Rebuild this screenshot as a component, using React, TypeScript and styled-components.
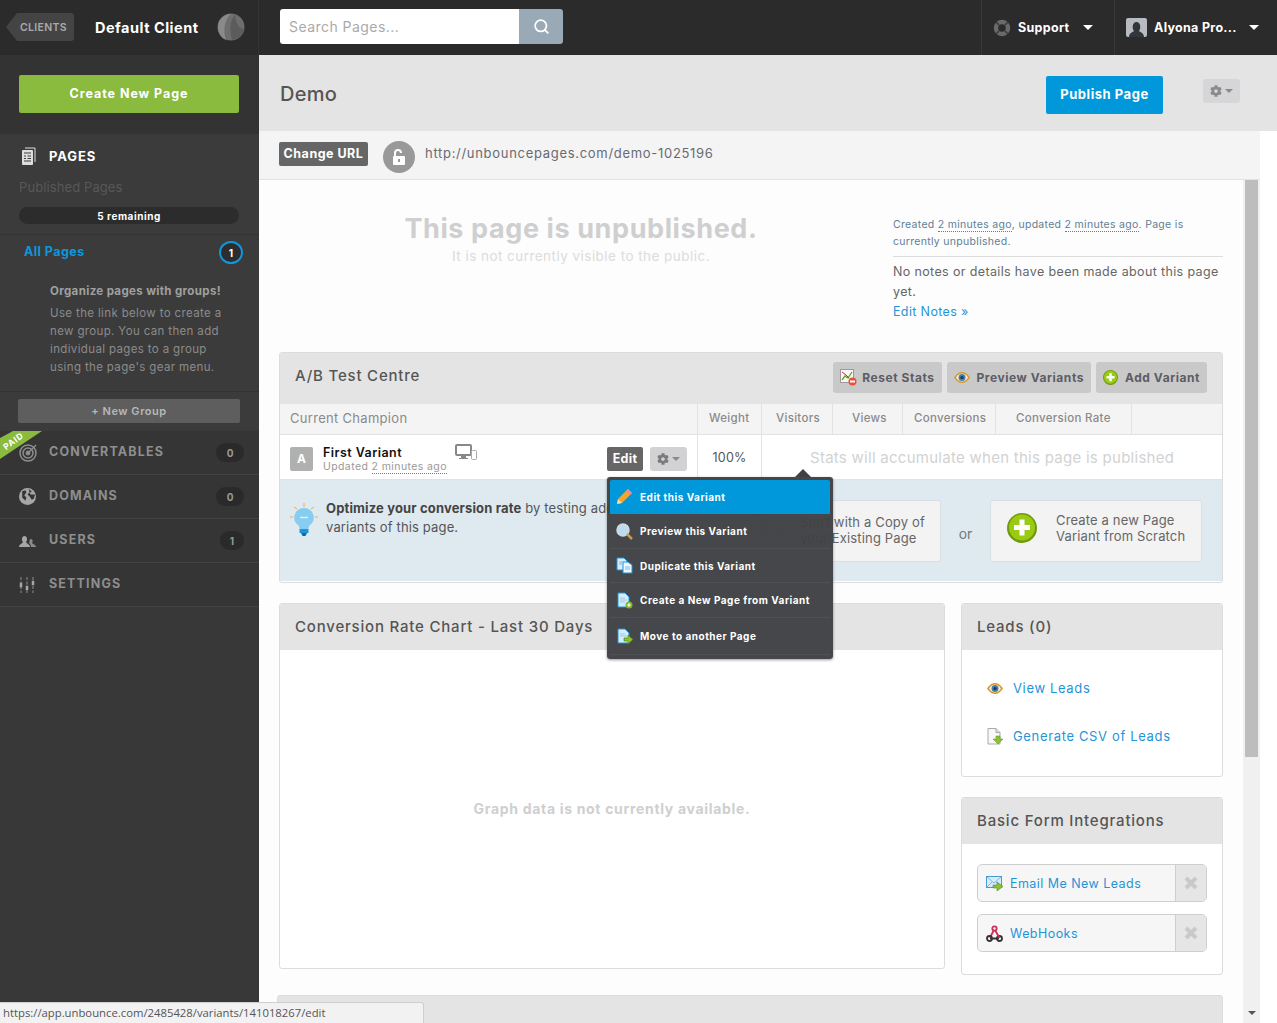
import React from "react";
import styled, { createGlobalStyle } from "styled-components";
import { Search } from "lucide-react";
import { FaCog } from "react-icons/fa";

const FONT = `Inter, "Open Sans", "Liberation Sans", sans-serif`;

const GlobalStyle = createGlobalStyle`
  html, body { margin: 0; padding: 0; height: 100%; overflow: hidden; background: #fff; }
  body { font-family: ${FONT}; }
  * { box-sizing: border-box; }
`;

/* ---------- shell ---------- */
const Shell = styled.div`
  position: relative;
  width: 100vw;
  height: 100vh;
  overflow: hidden;
  display: flex;
  flex-direction: column;
`;
const TopBar = styled.header`
  height: 55px;
  flex: none;
  background: #2b2b2b;
  display: flex;
  align-items: stretch;
`;
const ClientArea = styled.div`
  width: 259px;
  flex: none;
  display: flex;
  align-items: center;
  padding: 0 13px 1px 6px;
  border-right: 1px solid #333;
`;
const ClientsTag = styled.div`
  width: 68px;
  height: 28px;
  background: #444;
  border-radius: 3px;
  clip-path: polygon(11px 0, 100% 0, 100% 100%, 11px 100%, 0 50%);
  color: #aaa;
  font-size: 10.5px;
  font-weight: 600;
  letter-spacing: 0.3px;
  display: flex;
  align-items: center;
  padding-left: 14px;
`;
const ClientName = styled.div`
  flex: 1;
  margin-left: 21px;
  color: #fff;
  font-size: 14.5px;
  font-weight: 700;
  letter-spacing: 0.5px;
`;
const SearchArea = styled.div`
  flex: 1;
  display: flex;
  align-items: center;
  padding: 0 0 2px 21px;
`;
const SearchInput = styled.div`
  width: 239px;
  height: 35px;
  background: #fff;
  border-radius: 3px 0 0 3px;
  color: #aaa;
  font-size: 14px;
  letter-spacing: 0.45px;
  display: flex;
  align-items: center;
  padding-left: 9px;
`;
const SearchButton = styled.div`
  width: 44px;
  height: 35px;
  background: #9aa9b6;
  border-radius: 0 3px 3px 0;
  color: #fff;
  display: flex;
  align-items: center;
  justify-content: center;
`;
const TopMenu = styled.div<{ $w: number; $end: number }>`
  width: ${(p) => p.$w}px;
  flex: none;
  border-left: 1px solid #383838;
  color: #fff;
  font-size: 12.5px;
  font-weight: 700;
  letter-spacing: 0.3px;
  display: flex;
  align-items: center;
  padding: 0 ${(p) => p.$end}px 0 11px;
  gap: 7px;
`;
const TopMenuLabel = styled.span`
  flex: 1;
  white-space: nowrap;
`;
const DownCaret = styled.span`
  width: 0;
  height: 0;
  border-left: 5px solid transparent;
  border-right: 5px solid transparent;
  border-top: 5px solid #fff;
`;
const Body = styled.div`
  flex: 1;
  min-height: 0;
  display: flex;
`;

/* ---------- sidebar ---------- */
const Sidebar = styled.aside`
  width: 259px;
  flex: none;
  background: #383838;
  display: flex;
  flex-direction: column;
`;
const CreateArea = styled.div`
  height: 79px;
  background: #333;
  padding: 20px 20px 0 19px;
`;
const CreateButton = styled.div`
  height: 38px;
  padding-bottom: 1px;
  background: #8aba3e;
  border-radius: 2px;
  color: #fff;
  font-size: 12.5px;
  font-weight: 700;
  letter-spacing: 0.95px;
  display: flex;
  align-items: center;
  justify-content: center;
`;
const PagesSection = styled.section`
  background: #3b3b3b;
  display: flex;
  flex-direction: column;
`;
const PagesHead = styled.div`
  display: flex;
  align-items: center;
  gap: 13px;
  padding: 7px 0 0 22px;
  height: 37px;
  color: #fff;
  font-size: 13px;
  font-weight: 700;
  letter-spacing: 0.9px;
`;
const Published = styled.div`
  margin: 8px 0 0 19px;
  color: #585858;
  font-size: 13px;
  line-height: 16px;
  letter-spacing: 0.1px;
`;
const Remaining = styled.div`
  margin: 12px 20px 0 19px;
  height: 17px;
  border-radius: 9px;
  background: #2c2c2c;
  color: #fff;
  font-size: 10px;
  font-weight: 700;
  letter-spacing: 0.55px;
  display: flex;
  align-items: center;
  justify-content: center;
`;
const AllPagesRow = styled.div`
  margin-top: 10px;
  height: 33px;
  border-top: 1px solid #343434;
  padding: 6px 16px 0 24px;
  display: flex;
  align-items: flex-start;
  justify-content: space-between;
  color: #0f96dc;
  font-size: 12.5px;
  font-weight: 700;
  letter-spacing: 0.45px;
`;
const AllPagesLabel = styled.span`
  margin-top: 3px;
`;
const CountRing = styled.div`
  width: 24px;
  height: 23px;
  border-radius: 50%;
  border: 2px solid #0f96dc;
  color: #fff;
  background: #2d2d2d;
  font-size: 10px;
  font-weight: 700;
  letter-spacing: 0;
  display: flex;
  align-items: center;
  justify-content: center;
`;
const OrganizeBlock = styled.div`
  padding: 17px 34px 15px 50px;
  border-bottom: 1px solid #333;
  color: #8b8b8b;
  font-size: 11.5px;
  line-height: 18px;
  letter-spacing: 0.36px;
`;
const OrganizeTitle = styled.div`
  color: #a0a0a0;
  font-weight: 700;
  line-height: 14px;
  margin-bottom: 6px;
`;
const NewGroupArea = styled.div`
  height: 39px;
  padding: 7px 19px 0 18px;
  background: #3b3b3b;
`;
const NewGroupButton = styled.div`
  height: 24px;
  background: #5e5e5e;
  border-radius: 2px;
  color: #b8b8b8;
  font-size: 11px;
  font-weight: 600;
  letter-spacing: 0.55px;
  display: flex;
  align-items: center;
  justify-content: center;
`;
const NavItem = styled.div`
  position: relative;
  height: 44px;
  background: #353535;
  border-bottom: 1px solid #424242;
  display: flex;
  align-items: center;
  padding: 0 15px 3px 19px;
  color: #8e8e8e;
  font-size: 12.5px;
  font-weight: 700;
  letter-spacing: 1.15px;
`;
const NavIcon = styled.span`
  width: 30px;
  flex: none;
  display: flex;
  align-items: center;
  margin-top: 3px;
`;
const NavLabel = styled.span`
  flex: 1;
`;
const NavCount = styled.span<{ $w: number }>`
  width: ${(p) => p.$w}px;
  height: 19px;
  margin-top: 3px;
  border-radius: 10px;
  background: #2a2a2a;
  color: #999;
  font-size: 10px;
  letter-spacing: 0;
  display: flex;
  align-items: center;
  justify-content: center;
`;
const PaidRibbon = styled.svg`
  position: absolute;
  left: 0;
  top: 0;
`;
const PaidText = styled.span`
  position: absolute;
  left: 2px;
  top: 4px;
  transform: rotate(-36deg);
  color: #fff;
  font-size: 8.5px;
  line-height: 12px;
  font-weight: 700;
  letter-spacing: 0.8px;
`;

/* ---------- main ---------- */
const Main = styled.main`
  flex: 1;
  min-width: 0;
  display: flex;
  flex-direction: column;
  background: #fff;
`;
const PageHeader = styled.div`
  height: 76px;
  flex: none;
  background: #e4e4e4;
  display: flex;
  align-items: flex-start;
  padding: 21px 37px 0 21px;
`;
const PageTitle = styled.h1`
  flex: 1;
  margin: 5px 0 0;
  color: #555;
  font-size: 20px;
  line-height: 26px;
  font-weight: 500;
  letter-spacing: 0.3px;
`;
const PublishButton = styled.div`
  width: 117px;
  height: 38px;
  padding-bottom: 2px;
  background: #0098da;
  border-radius: 2px;
  color: #fff;
  font-size: 13px;
  font-weight: 700;
  letter-spacing: 0.55px;
  display: flex;
  align-items: center;
  justify-content: center;
  margin-right: 40px;
`;
const GearButton = styled.div<{ $bg: string; $ink: string }>`
  width: 37px;
  height: 24px;
  background: ${(p) => p.$bg};
  color: ${(p) => p.$ink};
  border-radius: 3px;
  display: flex;
  align-items: center;
  justify-content: center;
  gap: 3px;
`;
const SmallCaret = styled.span<{ $ink: string }>`
  width: 0;
  height: 0;
  border-left: 4px solid transparent;
  border-right: 4px solid transparent;
  border-top: 4px solid ${(p) => p.$ink};
`;
const HeaderGear = styled(GearButton)`
  margin-top: 3px;
`;
const Lower = styled.div`
  flex: 1;
  min-height: 0;
  display: flex;
`;
const LowerMain = styled.div`
  width: 1001px;
  flex: none;
  display: flex;
  flex-direction: column;
`;
const UrlBar = styled.div`
  height: 49px;
  flex: none;
  background: #f4f4f4;
  border-bottom: 1px solid #e2e2e2;
  display: flex;
  align-items: center;
  padding: 0 0 3px 20px;
`;
const ChangeUrl = styled.div`
  width: 89px;
  height: 24px;
  background: #666;
  border-radius: 2px;
  color: #fff;
  font-size: 12.5px;
  font-weight: 700;
  letter-spacing: 0.5px;
  display: flex;
  align-items: center;
  justify-content: center;
`;
const LockCircle = styled.div`
  width: 32px;
  height: 32px;
  margin: 7px 10px 0 15px;
  border-radius: 50%;
  background: #999;
  display: flex;
  align-items: center;
  justify-content: center;
`;
const UrlText = styled.div`
  margin-top: -1px;
  color: #6a6a72;
  font-size: 13px;
  letter-spacing: 0.7px;
`;
const ScrollRow = styled.div`
  flex: 1;
  min-height: 0;
  display: flex;
`;
const Content = styled.div`
  flex: 1;
  min-width: 0;
  overflow: hidden;
  padding: 0 20px;
  background: #fdfdfd;
`;
const ScrollTrack = styled.div`
  width: 17px;
  flex: none;
  background: #f0f0f0;
  padding: 0 2px;
  display: flex;
  flex-direction: column;
  align-items: stretch;
`;
const ScrollThumb = styled.div`
  height: 577px;
  background: #bdbdbd;
`;
const ScrollSpacer = styled.div`
  flex: 1;
`;
const ScrollArrow = styled.div`
  align-self: center;
  margin-bottom: 8px;
  width: 0;
  height: 0;
  border-left: 4px solid transparent;
  border-right: 4px solid transparent;
  border-top: 4px solid #555;
`;
const Gutter = styled.div`
  flex: 1;
  background: #fff;
`;

const Unpublished = styled.section`
  height: 172px;
  display: flex;
`;
const UnpubLeft = styled.div`
  width: 604px;
  padding-top: 33px;
  text-align: center;
`;
const UnpubTitle = styled.div`
  color: #cfcfcf;
  font-size: 27px;
  line-height: 32px;
  font-weight: 700;
  letter-spacing: 0.6px;
`;
const UnpubSub = styled.div`
  margin-top: 2px;
  color: #dcdcdc;
  font-size: 13.5px;
  line-height: 18px;
  letter-spacing: 0.46px;
`;
const UnpubRight = styled.div`
  margin-left: 10px;
  width: 330px;
  padding-top: 36px;
`;
const MetaText = styled.div`
  height: 41px;
  border-bottom: 1px solid #ddd;
  color: #5f7f96;
  font-size: 10.5px;
  line-height: 17px;
  letter-spacing: 0.3px;
`;
const DottedTime = styled.span`
  border-bottom: 1px dotted #777;
`;
const Notes = styled.div`
  margin-top: 5px;
  color: #666;
  font-size: 12.5px;
  line-height: 20px;
  letter-spacing: 0.36px;
`;
const BlueLink = styled.span`
  color: #1f94d8;
`;

const Panel = styled.section<{ $h: number }>`
  height: ${(p) => p.$h}px;
  border: 1px solid #dcdcdc;
  border-radius: 3px;
  background: #fff;
  overflow: hidden;
`;
const OverflowPanel = styled(Panel)`
  overflow: visible;
`;
const PanelHead = styled.div<{ $h: number }>`
  height: ${(p) => p.$h}px;
  background: #e4e4e4;
  padding: 0 15px 2px;
  display: flex;
  align-items: center;
  color: #555;
  font-size: 15px;
  font-weight: 500;
  letter-spacing: 0.8px;
`;
const AbTitle = styled.div`
  flex: 1;
  padding-bottom: 5px;
`;
const AbButton = styled.div<{ $gap: number }>`
  height: 31px;
  margin: 0 0 0 5px;
  background: #c9c9c9;
  border-radius: 3px;
  color: #5c5c66;
  font-size: 12px;
  font-weight: 700;
  letter-spacing: 0.55px;
  display: flex;
  align-items: center;
  gap: ${(p) => p.$gap}px;
  padding: 0 7px;
  white-space: nowrap;
`;
const TableHead = styled.div`
  height: 31px;
  background: #f4f4f4;
  border-bottom: 1px solid #e2e2e2;
  display: flex;
  color: #8a8a8a;
  font-size: 11.5px;
  font-weight: 500;
  letter-spacing: 0.3px;
`;
const Th = styled.div<{ $w: number; $pad: number }>`
  width: ${(p) => p.$w}px;
  flex: none;
  padding: 0 0 2px ${(p) => p.$pad}px;
  border-right: 1px solid #e2e2e2;
  display: flex;
  align-items: center;
`;
const ChampionTh = styled(Th)`
  font-size: 13px;
  font-weight: 400;
`;
const VariantRow = styled.div`
  height: 44px;
  display: flex;
  align-items: stretch;
`;
const VariantCell = styled.div`
  width: 418px;
  flex: none;
  border-right: 1px solid #e2e2e2;
  display: flex;
  align-items: center;
  padding: 0 10px;
`;
const VariantTile = styled.div`
  width: 23px;
  height: 24px;
  margin-top: 3px;
  background: #b0b0b0;
  border-radius: 2px;
  color: #fff;
  font-size: 12px;
  font-weight: 700;
  display: flex;
  align-items: center;
  justify-content: center;
`;
const VariantInfo = styled.div`
  margin-left: 10px;
  width: 132px;
  padding-top: 4px;
`;
const VariantName = styled.div`
  color: #111;
  font-size: 12.5px;
  line-height: 15px;
  font-weight: 600;
  letter-spacing: 0.45px;
`;
const VariantUpdated = styled.div`
  color: #999;
  font-size: 10.5px;
  line-height: 13px;
  letter-spacing: 0.4px;
  white-space: nowrap;
`;
const DeviceIcon = styled.svg`
  flex: none;
  align-self: flex-start;
  margin-top: 9px;
`;
const EditGroup = styled.div`
  position: relative;
  margin-left: auto;
  margin-top: 3px;
  margin-right: 0;
  display: flex;
  gap: 7px;
`;
const EditButton = styled.div`
  width: 36px;
  height: 24px;
  background: #666;
  border-radius: 2px;
  color: #fff;
  font-size: 12.5px;
  font-weight: 700;
  letter-spacing: 0.3px;
  display: flex;
  align-items: center;
  justify-content: center;
`;
const WeightCell = styled.div`
  width: 64px;
  flex: none;
  border-right: 1px solid #e2e2e2;
  color: #555;
  font-size: 12.5px;
  letter-spacing: 0.2px;
  display: flex;
  align-items: center;
  justify-content: center;
`;
const StatsNote = styled.div`
  flex: 1;
  padding-left: 48px;
  display: flex;
  align-items: center;
  color: #d2d2d2;
  font-size: 15px;
  letter-spacing: 0.27px;
  white-space: nowrap;
`;
const OptimizeArea = styled.div`
  height: 102px;
  background: #deeaf0;
  border-top: 1px solid #e2e2e2;
  display: flex;
  align-items: flex-start;
  padding: 20px 20px 0 10px;
`;
const BulbIcon = styled.svg`
  flex: none;
  margin: 3px 8px 0 0;
`;
const OptimizeText = styled.div`
  width: 330px;
  margin-top: -1px;
  color: #555;
  font-size: 13px;
  line-height: 19px;
  letter-spacing: 0.15px;
`;
const OptimizeStrong = styled.strong`
  color: #444;
  font-weight: 700;
`;
const VariantCard = styled.div<{ $w: number }>`
  width: ${(p) => p.$w}px;
  height: 62px;
  flex: none;
  background: #f3f3f3;
  border: 1px solid #d8dfe3;
  border-radius: 3px;
  display: flex;
  align-items: center;
  color: #666;
  font-size: 13px;
  line-height: 16px;
  letter-spacing: 0.15px;
`;
const CopyCard = styled(VariantCard)`
  margin-left: 89px;
  padding: 0 0 2px 4px;
  gap: 18px;
`;
const ScratchCard = styled(VariantCard)`
  padding: 0 0 6px 16px;
  gap: 19px;
`;
const OrLabel = styled.div`
  width: 49px;
  flex: none;
  height: 62px;
  display: flex;
  align-items: center;
  justify-content: center;
  padding-top: 4px;
  color: #777;
  font-size: 14px;
`;

const Menu = styled.div`
  position: absolute;
  left: 0;
  top: 30px;
  z-index: 5;
  width: 226px;
  height: 182px;
  padding: 3px 3px 0;
  background: rgba(64, 65, 68, 0.97);
  border-radius: 3px;
  box-shadow: 0 1px 3px rgba(0, 0, 0, 0.4);
  &::before {
    content: "";
    position: absolute;
    right: 22px;
    top: -8px;
    border-left: 8px solid transparent;
    border-right: 8px solid transparent;
    border-bottom: 8px solid #404144;
  }
`;
const MenuItem = styled.div<{ $active?: boolean; $h: number }>`
  height: ${(p) => p.$h}px;
  display: flex;
  align-items: center;
  gap: 7px;
  padding: 1px 0 0 6px;
  background: ${(p) => (p.$active ? "#0098da" : "transparent")};
  border-bottom: 1px solid ${(p) => (p.$active ? "#0098da" : "#505154")};
  border-radius: ${(p) => (p.$active ? "2px 2px 0 0" : "0")};
  color: #fff;
  font-size: 10px;
  font-weight: 700;
  letter-spacing: 0.5px;
  white-space: nowrap;
`;
const MenuIcon = styled.svg`
  flex: none;
`;

const TwoCols = styled.div`
  margin-top: 20px;
  display: flex;
  gap: 16px;
  align-items: flex-start;
`;
const ChartPanel = styled(Panel)`
  width: 666px;
  flex: none;
`;
const ChartEmpty = styled.div`
  height: 316px;
  display: flex;
  align-items: center;
  justify-content: center;
  color: #cfcfcf;
  font-size: 14px;
  font-weight: 700;
  letter-spacing: 0.68px;
`;
const SideCol = styled.div`
  width: 262px;
  flex: none;
  display: flex;
  flex-direction: column;
  gap: 20px;
`;
const LeadLinks = styled.div`
  padding: 14px 25px;
  display: flex;
  flex-direction: column;
  gap: 0;
`;
const LeadLink = styled.div`
  height: 48px;
  display: flex;
  align-items: center;
  gap: 10px;
  color: #1f94d8;
  font-size: 13px;
  letter-spacing: 0.65px;
`;
const IntegrationList = styled.div`
  padding: 20px 15px 0;
  display: flex;
  flex-direction: column;
  gap: 12px;
`;
const Integration = styled.div`
  height: 38px;
  border: 1px solid #cfcfcf;
  border-radius: 5px;
  overflow: hidden;
  display: flex;
  background: #f6f6f6;
`;
const IntegrationMain = styled.div`
  flex: 1;
  display: flex;
  align-items: center;
  gap: 7px;
  padding-left: 8px;
  color: #1f94d8;
  font-size: 12.5px;
  letter-spacing: 0.45px;
`;
const IntegrationClose = styled.div`
  width: 31px;
  flex: none;
  background: #e6e6e6;
  border-left: 1px solid #cfcfcf;
  display: flex;
  align-items: center;
  justify-content: center;
  color: #c9c9c9;
`;
const StubPanel = styled.section`
  margin: 20px 0 0 -2px;
  height: 60px;
  background: #e4e4e4;
  border-radius: 3px 3px 0 0;
  border: 1px solid #dcdcdc;
`;
const StatusBar = styled.div`
  position: absolute;
  left: 0;
  bottom: 0;
  width: 424px;
  height: 21px;
  background: #f2f2f2;
  border: 1px solid #cfcfcf;
  border-left: none;
  border-bottom: none;
  border-top-right-radius: 3px;
  color: #555;
  font-family: "Open Sans", "Liberation Sans", sans-serif;
  font-size: 11.3px;
  display: flex;
  align-items: center;
  padding: 0 0 1px 3px;
`;

/* ---------- drawn icons ---------- */
const Avatar = () => (
  <svg width="28" height="28" viewBox="0 0 28 28">
    <circle cx="14" cy="14" r="13.5" fill="#6e6e6e" />
    <path d="M14 1C7 7 6 18 9 27c-5-2-8-7-8-13C1 7 7 1 14 1z" fill="#8a8a8a" />
    <path d="M18 2c-5 6-6 13-3 25 6-1 11-5 12-11-5 0-8-6-9-14z" fill="#5c5c5c" />
  </svg>
);
const LifeRing = () => (
  <svg width="18" height="18" viewBox="0 0 18 18">
    <circle cx="9" cy="9" r="6" fill="none" stroke="#6a6a6a" strokeWidth="4.5" />
    <path d="M3 3l3 3M15 3l-3 3M3 15l3-3M15 15l-3-3" stroke="#3a3a3a" strokeWidth="1.500" />
  </svg>
);
const UserPic = () => (
  <svg width="21" height="20" viewBox="0 0 21 20">
    <rect width="21" height="19" rx="2" fill="#b8bcc2" />
    <path d="M3 19c0-4 4-5 5-6-2-2-2-9 2.500-9S15 11 13 13c1 1 5 2 5 6z" fill="#32353a" />
  </svg>
);
const PagesIcon = () => (
  <svg width="14" height="18" viewBox="0 0 14 18">
    <path d="M3 1h10v14" fill="none" stroke="#ddd" strokeWidth="1" />
    <rect x="0" y="3" width="11" height="15" rx="1" fill="#ddd" />
    <path d="M2 6h7M2 9h2M5.5 9H9M2 11.500h2M5.500 11.500H9M2 14h7" stroke="#3b3b3b" strokeWidth="1.200" />
  </svg>
);
const TargetIcon = () => (
  <svg width="19" height="19" viewBox="0 0 19 19" fill="none" stroke="#8e8e8e">
    <circle cx="9" cy="10" r="8" strokeWidth="1.500" />
    <circle cx="9" cy="10" r="5" strokeWidth="1.500" />
    <circle cx="9" cy="10" r="2" fill="#8e8e8e" />
    <path d="M9 10l8-8" strokeWidth="1.300" />
  </svg>
);
const GlobeIcon = () => (
  <svg width="17" height="17" viewBox="0 0 16 16">
    <circle cx="8" cy="8" r="8" fill="#a6a6a6" />
    <path d="M3 3l3-1 1 2-2 3 2 2-1 3-3-3zM9 1l3 2-2 2 1 1 4 0-1 4-2 1-2-3-2-2 2-2z" fill="#353535" />
  </svg>
);
const UsersIcon = () => (
  <svg width="17" height="14" viewBox="0 0 17 14">
    <path d="M0 13c0-3 3-3 4-5-2-2-1-6 1.500-6S9 6 7 8c1 2 4 2 4 5z" fill="#a6a6a6" />
    <path d="M12 13c0-2-1-3-2-4 1-1 0-4 2-4s2 3 1 4c1 1 4 2 4 4z" fill="#8a8a8a" />
  </svg>
);
const SlidersIcon = () => (
  <svg width="16" height="16" viewBox="0 0 16 16" stroke="#a6a6a6">
    <path d="M2 0v16M8 0v16M14 0v16" strokeWidth=".8" strokeDasharray="3 1.500" />
    <rect x="1" y="6" width="2" height="4" fill="#a6a6a6" strokeWidth=".5" />
    <rect x="7" y="9" width="2" height="4" fill="#a6a6a6" strokeWidth=".5" />
    <rect x="13" y="4" width="2" height="4" fill="#a6a6a6" strokeWidth=".5" />
  </svg>
);
const LockIcon = () => (
  <svg width="14" height="16" viewBox="0 0 14 16">
    <path d="M3 7V4a3 3 0 0 1 6 0" fill="none" stroke="#fff" strokeWidth="2" />
    <rect x="1" y="7" width="12" height="9" rx="1" fill="#fff" />
    <rect x="6" y="10" width="2" height="3" fill="#999" />
  </svg>
);
const ResetIcon = () => (
  <svg width="17" height="17" viewBox="0 0 17 17">
    <rect x="0.500" y="0.500" width="13" height="13" fill="#f7f7f7" stroke="#999" />
    <path d="M2 11l3-4 3 2 4-6" fill="none" stroke="#6ea02a" strokeWidth="1.300" />
    <path d="M2 3l4 3 3 3" fill="none" stroke="#d24" strokeWidth="1" />
    <circle cx="12.500" cy="12.500" r="4" fill="#e8503a" />
    <rect x="10" y="11.500" width="5" height="2" fill="#fff" />
  </svg>
);
const EyeIcon = ({ w = 16 }: { w?: number }) => (
  <svg width={w} height={w * 0.6875} viewBox="0 0 16 11">
    <path d="M0 5.500C3 1 6 0 8 0s5 1 8 5.500C13 10 10 11 8 11s-5-1-8-5.500z" fill="#d9962a" />
    <path d="M2 5.500C4 2.500 6 1.500 8 1.500s4 1 6 4c-2 3-4 4-6 4s-4-1-6-4z" fill="#f4f1e6" />
    <circle cx="8" cy="5.500" r="3.500" fill="#4a7ea8" />
    <circle cx="8" cy="5.500" r="1.600" fill="#173a55" />
  </svg>
);
const PlusBadge = ({ size }: { size: number }) => (
  <svg width={size} height={size} viewBox="0 0 30 30">
    <circle cx="15" cy="15" r="15" fill="#6f9a0c" />
    <circle cx="15" cy="14.500" r="13" fill="#9acb14" />
    <path d="M12.500 6.500h5v5.500h5.500v5h-5.500v5.500h-5v-5.500H7v-5h5.500z" fill="#fff" />
  </svg>
);
const DeviceSvg = () => (
  <DeviceIcon width="22" height="16" viewBox="0 0 22 16">
    <rect x="1" y="1" width="15" height="10" rx="1" fill="none" stroke="#888" strokeWidth="2" />
    <path d="M6 12h5v2h2v1H4v-1h2z" fill="#888" />
    <rect x="16.500" y="6.500" width="5" height="9" rx="1" fill="#fff" stroke="#aaa" />
  </DeviceIcon>
);
const Bulb = () => (
  <BulbIcon width="28" height="33" viewBox="0 0 28 33">
    <path d="M14 0v4M4 4l3 2M24 4l-3 2M0 14h3M25 14h3" stroke="#f5a94a" strokeWidth="1" />
    <path d="M14 5a9.500 9.500 0 0 1 6 17c-1 1-1.500 2-1.500 4h-9c0-2-.5-3-1.500-4A9.500 9.500 0 0 1 14 5z" fill="#86cdf0" />
    <path d="M10 15l2-1 2 1 2-1 2 1" fill="none" stroke="#fff" strokeWidth="1" />
    <rect x="9.500" y="26" width="9" height="4" fill="#1f94d8" />
    <path d="M11 30h6l-1.500 3h-3z" fill="#0c6ea8" />
  </BulbIcon>
);
const DocPair = () => (
  <svg width="32" height="32" viewBox="0 0 32 32" fill="none" stroke="#c9c9c9">
    <path d="M1 1h11l5 5v13H1zM12 1v5h5" />
    <path d="M13 11h11l7 6v14H13zM24 11v6h7" fill="#f3f3f3" />
  </svg>
);
const DocGlyph = ({ accent }: { accent: string }) => (
  <MenuIcon width="17" height="17" viewBox="0 0 17 17">
    <path d="M2 1h7l4 4v10H2z" fill="#d8ecf8" stroke="#1f94d8" />
    <path d="M4 6h5M4 8h7M4 10h5" stroke="#9cc8e4" strokeWidth="1" />
    <circle cx="13" cy="13" r="3.500" fill={accent} />
    <path d="M11 13h4M13 11v4" stroke="#fff" strokeWidth="1" />
  </MenuIcon>
);
const MoveGlyph = () => (
  <MenuIcon width="17" height="17" viewBox="0 0 17 17">
    <path d="M2 1h7l4 4v10H2z" fill="#d8ecf8" stroke="#1f94d8" />
    <path d="M4 6h5M4 8h7" stroke="#9cc8e4" strokeWidth="1" />
    <path d="M8 10h4V7l5 4.500L12 16v-3H8z" fill="#8ac234" stroke="#4c7a10" strokeWidth=".6" />
  </MenuIcon>
);
const DupGlyph = () => (
  <MenuIcon width="17" height="17" viewBox="0 0 17 17">
    <path d="M1 1h7l3 3v9H1z" fill="#d8ecf8" stroke="#1f94d8" />
    <path d="M7 5h5l4 3v8H7z" fill="#eef7fc" stroke="#1f94d8" />
    <path d="M3 5h4M3 7h3M9 10h5M9 12h5" stroke="#7fb8dc" />
  </MenuIcon>
);
const Pencil = () => (
  <MenuIcon width="17" height="17" viewBox="0 0 17 17">
    <path d="M1 16l1-5L12 1l4 4L6 15z" fill="#f5a623" />
    <path d="M1 16l1-5 4 4z" fill="#f6dcb0" />
    <path d="M12 1l4 4-2 2-4-4z" fill="#e88aa0" />
  </MenuIcon>
);
const Magnifier = () => (
  <MenuIcon width="17" height="17" viewBox="0 0 17 17">
    <circle cx="7" cy="7" r="6" fill="#bcdcf2" stroke="#d8d8d8" strokeWidth="1.500" />
    <path d="M11 11l5 5" stroke="#c99a5c" strokeWidth="2.500" />
  </MenuIcon>
);
const CsvIcon = () => (
  <svg width="16" height="17" viewBox="0 0 16 17">
    <path d="M1 .5h8l4 4V16H1z" fill="#f8f8f8" stroke="#aaa" />
    <path d="M9 .5v4h4" fill="#ddd" stroke="#aaa" />
    <path d="M9 8h4v3h3l-5 5-5-5h3z" fill="#8ac234" stroke="#5e8a1c" strokeWidth=".5" />
  </svg>
);
const MailIcon = () => (
  <svg width="17" height="15" viewBox="0 0 17 15">
    <rect x=".5" y=".5" width="15" height="11" fill="#d6ecfa" stroke="#4a9bd4" />
    <path d="M1 1l7 6 7-6M1 11l5-5M15 11l-5-5" fill="none" stroke="#7db9e2" />
    <path d="M7 9h4V6l6 4.500-6 4.500v-3H7z" fill="#8ac234" stroke="#4c7a10" strokeWidth=".5" />
  </svg>
);
const HookIcon = () => (
  <svg width="17" height="17" viewBox="0 0 17 17" fill="none" strokeWidth="1.800">
    <path d="M8 5L4 12.500" stroke="#c8325a" />
    <circle cx="8.500" cy="3.500" r="2.200" stroke="#c8325a" />
    <path d="M4 13.500h9" stroke="#333" />
    <circle cx="3.500" cy="13.500" r="2.500" stroke="#333" />
    <circle cx="13.500" cy="13.500" r="2.500" stroke="#333" />
    <path d="M9 5l4.500 8" stroke="#c8325a" />
  </svg>
);
const CrossIcon = () => (
  <svg width="14" height="14" viewBox="0 0 14 14">
    <path d="M2 2l10 10M12 2L2 12" stroke="#c9c9c9" strokeWidth="4" />
  </svg>
);

export default function App() {
  return (
    <Shell>
      <GlobalStyle />
      <TopBar>
        <ClientArea>
          <ClientsTag>CLIENTS</ClientsTag>
          <ClientName>Default Client</ClientName>
          <Avatar />
        </ClientArea>
        <SearchArea>
          <SearchInput>Search Pages...</SearchInput>
          <SearchButton>
            <Search size={17} strokeWidth={2.5} />
          </SearchButton>
        </SearchArea>
        <TopMenu $w={133} $end={21}>
          <LifeRing />
          <TopMenuLabel>Support</TopMenuLabel>
          <DownCaret />
        </TopMenu>
        <TopMenu $w={163} $end={18}>
          <UserPic />
          <TopMenuLabel>Alyona Pro...</TopMenuLabel>
          <DownCaret />
        </TopMenu>
      </TopBar>
      <Body>
        <Sidebar>
          <CreateArea>
            <CreateButton>Create New Page</CreateButton>
          </CreateArea>
          <PagesSection>
            <PagesHead>
              <PagesIcon />
              PAGES
            </PagesHead>
            <Published>Published Pages</Published>
            <Remaining>5 remaining</Remaining>
            <AllPagesRow>
              <AllPagesLabel>All Pages</AllPagesLabel>
              <CountRing>1</CountRing>
            </AllPagesRow>
            <OrganizeBlock>
              <OrganizeTitle>Organize pages with groups!</OrganizeTitle>
              Use the link below to create a new group. You can then add individual pages to a group using the page's gear menu.
            </OrganizeBlock>
            <NewGroupArea>
              <NewGroupButton>+ New Group</NewGroupButton>
            </NewGroupArea>
          </PagesSection>
          <NavItem>
            <PaidRibbon width="42" height="28" viewBox="0 0 42 28">
              <path d="M0 7L13 0h29L0 28z" fill="#8aba3e" />
            </PaidRibbon>
            <PaidText>PAID</PaidText>
            <NavIcon><TargetIcon /></NavIcon>
            <NavLabel>CONVERTABLES</NavLabel>
            <NavCount $w={28}>0</NavCount>
          </NavItem>
          <NavItem>
            <NavIcon><GlobeIcon /></NavIcon>
            <NavLabel>DOMAINS</NavLabel>
            <NavCount $w={28}>0</NavCount>
          </NavItem>
          <NavItem>
            <NavIcon><UsersIcon /></NavIcon>
            <NavLabel>USERS</NavLabel>
            <NavCount $w={24}>1</NavCount>
          </NavItem>
          <NavItem>
            <NavIcon><SlidersIcon /></NavIcon>
            <NavLabel>SETTINGS</NavLabel>
          </NavItem>
        </Sidebar>
        <Main>
          <PageHeader>
            <PageTitle>Demo</PageTitle>
            <PublishButton>Publish Page</PublishButton>
            <HeaderGear $bg="#d6d6d8" $ink="#8a8a8a">
              <FaCog size={12} />
              <SmallCaret $ink="#8a8a8a" />
            </HeaderGear>
          </PageHeader>
          <Lower>
            <LowerMain>
              <UrlBar>
                <ChangeUrl>Change URL</ChangeUrl>
                <LockCircle><LockIcon /></LockCircle>
                <UrlText>http://unbouncepages.com/demo-1025196</UrlText>
              </UrlBar>
              <ScrollRow>
                <Content>
                  <Unpublished>
                    <UnpubLeft>
                      <UnpubTitle>This page is unpublished.</UnpubTitle>
                      <UnpubSub>It is not currently visible to the public.</UnpubSub>
                    </UnpubLeft>
                    <UnpubRight>
                      <MetaText>
                        Created <DottedTime>2 minutes ago</DottedTime>, updated <DottedTime>2 minutes ago</DottedTime>. Page is<br />currently unpublished.
                      </MetaText>
                      <Notes>
                        No notes or details have been made about this page yet.
                        <br />
                        <BlueLink>Edit Notes »</BlueLink>
                      </Notes>
                    </UnpubRight>
                  </Unpublished>

                  <OverflowPanel $h={231}>
                    <PanelHead $h={51}>
                      <AbTitle>A/B Test Centre</AbTitle>
                      <AbButton $gap={5}><ResetIcon />Reset Stats</AbButton>
                      <AbButton $gap={7}><EyeIcon />Preview Variants</AbButton>
                      <AbButton $gap={7}><PlusBadge size={15} />Add Variant</AbButton>
                    </PanelHead>
                    <TableHead>
                      <ChampionTh $w={418} $pad={10}>Current Champion</ChampionTh>
                      <Th $w={64} $pad={11}>Weight</Th>
                      <Th $w={71} $pad={14}>Visitors</Th>
                      <Th $w={70} $pad={19}>Views</Th>
                      <Th $w={93} $pad={11}>Conversions</Th>
                      <Th $w={136} $pad={20}>Conversion Rate</Th>
                    </TableHead>
                    <VariantRow>
                      <VariantCell>
                        <VariantTile>A</VariantTile>
                        <VariantInfo>
                          <VariantName>First Variant</VariantName>
                          <VariantUpdated>
                            Updated <DottedTime>2 minutes ago</DottedTime>
                          </VariantUpdated>
                        </VariantInfo>
                        <DeviceSvg />
                        <EditGroup>
                          <EditButton>Edit</EditButton>
                          <GearButton $bg="#d2d2d4" $ink="#7a7a7a">
                            <FaCog size={12} />
                            <SmallCaret $ink="#8a8a8a" />
                          </GearButton>
                          <Menu>
                            <MenuItem $active $h={34}><Pencil />Edit this Variant</MenuItem>
                            <MenuItem $h={35}><Magnifier />Preview this Variant</MenuItem>
                            <MenuItem $h={34}><DupGlyph />Duplicate this Variant</MenuItem>
                            <MenuItem $h={35}><DocGlyph accent="#7fb52c" />Create a New Page from Variant</MenuItem>
                            <MenuItem $h={37}><MoveGlyph />Move to another Page</MenuItem>
                          </Menu>
                        </EditGroup>
                      </VariantCell>
                      <WeightCell>100%</WeightCell>
                      <StatsNote>Stats will accumulate when this page is published</StatsNote>
                    </VariantRow>
                    <OptimizeArea>
                      <Bulb />
                      <OptimizeText>
                        <OptimizeStrong>Optimize your conversion rate</OptimizeStrong> by testing additional variants of this page.
                      </OptimizeText>
                      <CopyCard $w={196}>
                        <DocPair />
                        <span>Start with a Copy of<br />your Existing Page</span>
                      </CopyCard>
                      <OrLabel>or</OrLabel>
                      <ScratchCard $w={212}>
                        <PlusBadge size={30} />
                        <span>Create a new Page<br />Variant from Scratch</span>
                      </ScratchCard>
                    </OptimizeArea>
                  </OverflowPanel>

                  <TwoCols>
                    <ChartPanel $h={366}>
                      <PanelHead $h={46}>Conversion Rate Chart - Last 30 Days</PanelHead>
                      <ChartEmpty>Graph data is not currently available.</ChartEmpty>
                    </ChartPanel>
                    <SideCol>
                      <Panel $h={174}>
                        <PanelHead $h={46}>Leads (0)</PanelHead>
                        <LeadLinks>
                          <LeadLink><EyeIcon />View Leads</LeadLink>
                          <LeadLink><CsvIcon />Generate CSV of Leads</LeadLink>
                        </LeadLinks>
                      </Panel>
                      <Panel $h={178}>
                        <PanelHead $h={46}>Basic Form Integrations</PanelHead>
                        <IntegrationList>
                          <Integration>
                            <IntegrationMain><MailIcon />Email Me New Leads</IntegrationMain>
                            <IntegrationClose><CrossIcon /></IntegrationClose>
                          </Integration>
                          <Integration>
                            <IntegrationMain><HookIcon />WebHooks</IntegrationMain>
                            <IntegrationClose><CrossIcon /></IntegrationClose>
                          </Integration>
                        </IntegrationList>
                      </Panel>
                    </SideCol>
                  </TwoCols>
                  <StubPanel />
                </Content>
                <ScrollTrack>
                  <ScrollThumb />
                  <ScrollSpacer />
                  <ScrollArrow />
                </ScrollTrack>
              </ScrollRow>
            </LowerMain>
            <Gutter />
          </Lower>
        </Main>
      </Body>
      <StatusBar>https://app.unbounce.com/2485428/variants/141018267/edit</StatusBar>
    </Shell>
  );
}
